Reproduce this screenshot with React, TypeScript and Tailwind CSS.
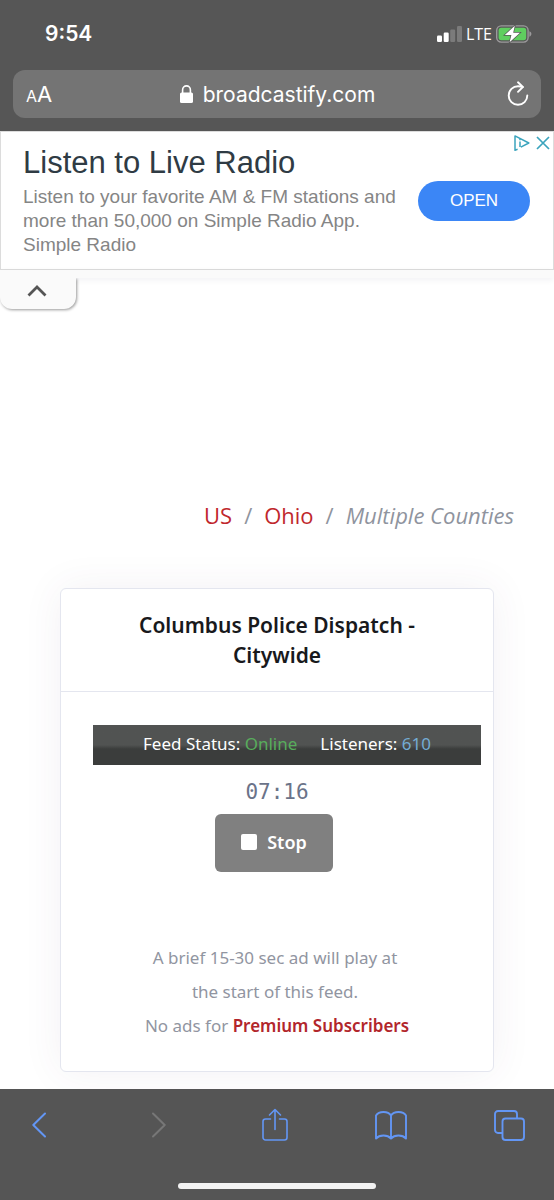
import React from 'react';

const StatusBar: React.FC = () => (
  <div className="flex h-[70px] items-center justify-between pl-[45px] pr-[22px] pb-[3px] text-white">
    <span className="text-[21px] font-semibold">9:54</span>
    <div className="flex items-center gap-1">
      <svg width="25" height="16" viewBox="0 0 25 16" aria-hidden="true">
        <rect x="0" y="9.5" width="5" height="6.5" rx="1.2" fill="#fff" />
        <rect x="6.7" y="6.5" width="5" height="9.5" rx="1.2" fill="#fff" />
        <rect x="13.2" y="3.5" width="5" height="12.5" rx="1.2" fill="#7b7b7b" />
        <rect x="20" y="0" width="5" height="16" rx="1.2" fill="#7b7b7b" />
      </svg>
      <span className="font-['Open_Sans',sans-serif] text-[16px] leading-5">LTE</span>
      <svg width="36" height="18" viewBox="0 0 36 18" aria-hidden="true">
        <rect x="0.7" y="0.9" width="31.4" height="16.2" rx="4.5" fill="none" stroke="#9c9a9c" strokeWidth="1.4" />
        <rect x="2.6" y="2.8" width="27.6" height="12.4" rx="2.6" fill="#5fce5f" />
        <path d="M33.4 6.3c1.3.5 2 1.5 2 2.7s-.7 2.2-2 2.7z" fill="#9c9a9c" />
        <path d="M18.8.8 8.8 10h6.6l-1.8 7.3L24 7.7h-6.8z" fill="#fff" stroke="#565656" strokeWidth="1.4" paintOrder="stroke" />
      </svg>
    </div>
  </div>
);

const AddressBar: React.FC = () => (
  <div className="mx-[13px] mb-[13px] flex h-12 items-center justify-between rounded-xl bg-[#747474] px-[13px] text-white">
    <button aria-label="Text size" className="flex w-7 items-baseline leading-none">
      <span className="text-[16px]">A</span>
      <span className="text-[22px]">A</span>
    </button>
    <div className="flex items-center gap-[10px]">
      <svg width="13" height="18" viewBox="0 0 13 18" aria-hidden="true">
        <rect x="0" y="7.5" width="13" height="10.5" rx="1.6" fill="#fff" />
        <path d="M2.6 8V4.9a3.9 4 0 0 1 7.8 0V8" fill="none" stroke="#fff" strokeWidth="1.6" />
      </svg>
      <span className="pt-px text-[21px]">broadcastify.com</span>
    </div>
    <button aria-label="Reload" className="-mr-px flex w-7 justify-end">
      <svg width="22" height="26" viewBox="0 0 22 26" fill="none" stroke="#fff" strokeWidth="1.9" strokeLinecap="round" strokeLinejoin="round">
        <path d="M15.8 6C14.3 5.3 12.6 5.2 11 5.2a9.3 9.3 0 1 0 9.3 9.3" />
        <path d="m11 1.3 4.8 4.7-4.8 4.8" />
      </svg>
    </button>
  </div>
);

const AdBanner: React.FC = () => (
  <section className="flex h-[139px] items-start justify-between border border-[#dcdcdc] bg-white pl-[22px] font-['Liberation_Sans',Arial,sans-serif]">
    <div className="pt-[13px]">
      <h2 className="text-[31px] leading-9 text-[#2f3b44]">Listen to Live Radio</h2>
      <p className="max-w-[380px] pt-1 text-[19px] leading-6 text-[#858585]">
        Listen to your favorite AM &amp; FM stations and more than 50,000 on Simple Radio App.
      </p>
      <p className="text-[19px] leading-6 text-[#858585]">Simple Radio</p>
    </div>
    <div className="flex flex-col items-end">
      <div className="flex h-[22px] items-center gap-[6px] pr-[3px]">
        <a href="#adchoices" aria-label="AdChoices">
          <svg width="16" height="16" viewBox="0 0 16 16" fill="none" stroke="#3ba4bd" strokeWidth="1.5" strokeLinejoin="round">
            <path d="M3.6 14.3 1 15.2V.9L14.8 8l-8 4.200" />
            <path d="M6 6.500v5.500M6 3.700v1.500" />
          </svg>
        </a>
        <button aria-label="Close ad">
          <svg width="14" height="14" viewBox="0 0 14 14" stroke="#3ba4bd" strokeWidth="1.7">
            <path d="m1 1 12 12M13 1 1 13" />
          </svg>
        </button>
      </div>
      <button className="mt-[27px] mr-[23px] h-10 w-28 rounded-full bg-[#3b86f6] pb-px text-[17px] text-white">OPEN</button>
    </div>
  </section>
);

const CollapseTab: React.FC = () => (
  <div className="h-10">
    <div className="h-2 bg-[#fafafa] shadow-[0_2px_6px_rgba(0,0,60,0.06)]" />
    <button
      aria-label="Collapse ad"
      className="relative flex h-[31px] w-[76px] items-center justify-center rounded-b-xl bg-[#fafafa] pr-[2px] pb-[6px] shadow-[1px_1px_3px_rgba(0,0,0,0.4)] [clip-path:inset(0_-5px_-5px_0)]"
    >
      <svg width="20" height="13" viewBox="0 0 20 13" fill="none" stroke="#555" strokeWidth="2.8">
        <path d="m1.5 11.5 8.5-8.5 8.5 8.5" />
      </svg>
    </button>
  </div>
);

const Breadcrumb: React.FC = () => (
  <nav aria-label="Breadcrumb" className="flex justify-end gap-3 pr-10 font-['Open_Sans',sans-serif] text-[22px] leading-8 text-[#8f949e]">
    <a href="#us" className="text-[#c0272d]">US</a>
    <span>/</span>
    <a href="#ohio" className="text-[#c0272d]">Ohio</a>
    <span>/</span>
    <em>Multiple Counties</em>
  </nav>
);

const FeedCard: React.FC = () => (
  <section className="mx-[60px] mt-[57px] rounded-md border border-[#e4e6ef] bg-white text-center shadow-[0_0_40px_rgba(82,63,105,0.07)]">
    <h1 className="border-b border-[#e4e6ef] px-16 py-[21px] text-[21px] leading-[30px] font-semibold text-[#18191c]">
      Columbus Police Dispatch - Citywide
    </h1>
    <div className="flex flex-col items-center px-8 pt-[33px] pb-7 text-[17px]">
      <div className="-mr-5 flex h-10 items-center justify-center gap-[23px] self-stretch bg-linear-to-b from-[#515352] from-50% to-[#3b3d3c] to-60% pb-[2px] text-white">
        <span>Feed Status: <span className="text-[#58ad5c]">Online</span></span>
        <span>Listeners: <span className="text-[#74acd2]">610</span></span>
      </div>
      <time className="mt-3 font-['DejaVu_Sans_Mono',monospace] text-[21px] leading-[30px] text-[#6b7389]">07:16</time>
      <button className="mt-[7px] mr-[6px] flex h-[58px] w-[118px] items-center justify-center gap-[10px] rounded-md bg-[#808080] pb-[2px] text-[18px] font-semibold text-white">
        <span className="size-4 rounded-xs bg-white" />
        Stop
      </button>
      <p className="pt-[69px] leading-[34px] text-[#9195a1]">
        <span className="mr-1 block">A brief 15-30 sec ad will play at</span>
        <span className="mr-1 block">the start of this feed.</span>
        No ads for <a href="#premium" className="font-semibold text-[#b2262b]">Premium Subscribers</a>
      </p>
    </div>
  </section>
);

const Toolbar: React.FC = () => (
  <footer className="bg-[#555555]">
    <nav aria-label="Browser" className="flex h-[72px] items-center justify-between pr-[29px] pl-8 text-[#6396f4]">
      <button aria-label="Back" className="w-7">
        <svg width="14" height="26" viewBox="0 0 14 26" fill="none" stroke="currentColor" strokeWidth="2" strokeLinecap="round" strokeLinejoin="round">
          <path d="M13 1.5 1.3 13 13 24.5" />
        </svg>
      </button>
      <button aria-label="Forward" disabled className="flex w-7 justify-center pr-1 text-[#777777]">
        <svg width="14" height="26" viewBox="0 0 14 26" fill="none" stroke="currentColor" strokeWidth="2" strokeLinecap="round" strokeLinejoin="round">
          <path d="M1 1.5 12.7 13 1 24.5" />
        </svg>
      </button>
      <button aria-label="Share">
        <svg width="26" height="34" viewBox="0 0 26 34" fill="none" stroke="currentColor" strokeWidth="1.6" strokeLinecap="round" strokeLinejoin="round">
          <path d="M8.5 11H3.5A2.5 2.5 0 0 0 1 13.5v16A2.5 2.5 0 0 0 3.5 32h19a2.5 2.5 0 0 0 2.5-2.5v-16a2.5 2.5 0 0 0-2.5-2.5h-5" />
          <path d="M13 21.5V1.5M7.5 7 13 1.5 18.5 7" />
        </svg>
      </button>
      <button aria-label="Bookmarks">
        <svg width="32" height="29" viewBox="0 0 32 29" fill="none" stroke="currentColor" strokeWidth="1.9" strokeLinejoin="round">
          <path d="M16 4.5C14.5 2 11.5 1 8.5 1S2.5 2 1 4.500v23c1.800-2 4.500-3 7.500-3s5.700 1 7.500 3c1.800-2 4.500-3 7.500-3s5.700 1 7.500 3v-23C29.500 2 26.500 1 23.500 1s-6 1-7.500 3.500zv23" />
        </svg>
      </button>
      <button aria-label="Tabs">
        <svg width="31" height="31" viewBox="0 0 31 31" fill="none" stroke="currentColor" strokeWidth="1.9">
          <path d="M8.5 23H4a3 3 0 0 1-3-3V4a3 3 0 0 1 3-3h16a3 3 0 0 1 3 3v4.5" />
          <rect x="8.5" y="8.5" width="21.5" height="21.5" rx="3" />
        </svg>
      </button>
    </nav>
    <div className="flex justify-center pt-[22px] pb-[11px]">
      <div className="h-[6px] w-[198px] rounded-full bg-[#f2f2f2]" />
    </div>
  </footer>
);

export default function App() {
  return (
    <div className="flex min-h-screen flex-col bg-white">
      <header className="bg-[#565656] font-[Inter,sans-serif]">
        <StatusBar />
        <AddressBar />
      </header>
      <AdBanner />
      <CollapseTab />
      <main className="flex-1 overflow-hidden pt-[189px] pb-4 font-['Noto_Sans',sans-serif]">
        <Breadcrumb />
        <FeedCard />
      </main>
      <Toolbar />
    </div>
  );
}
